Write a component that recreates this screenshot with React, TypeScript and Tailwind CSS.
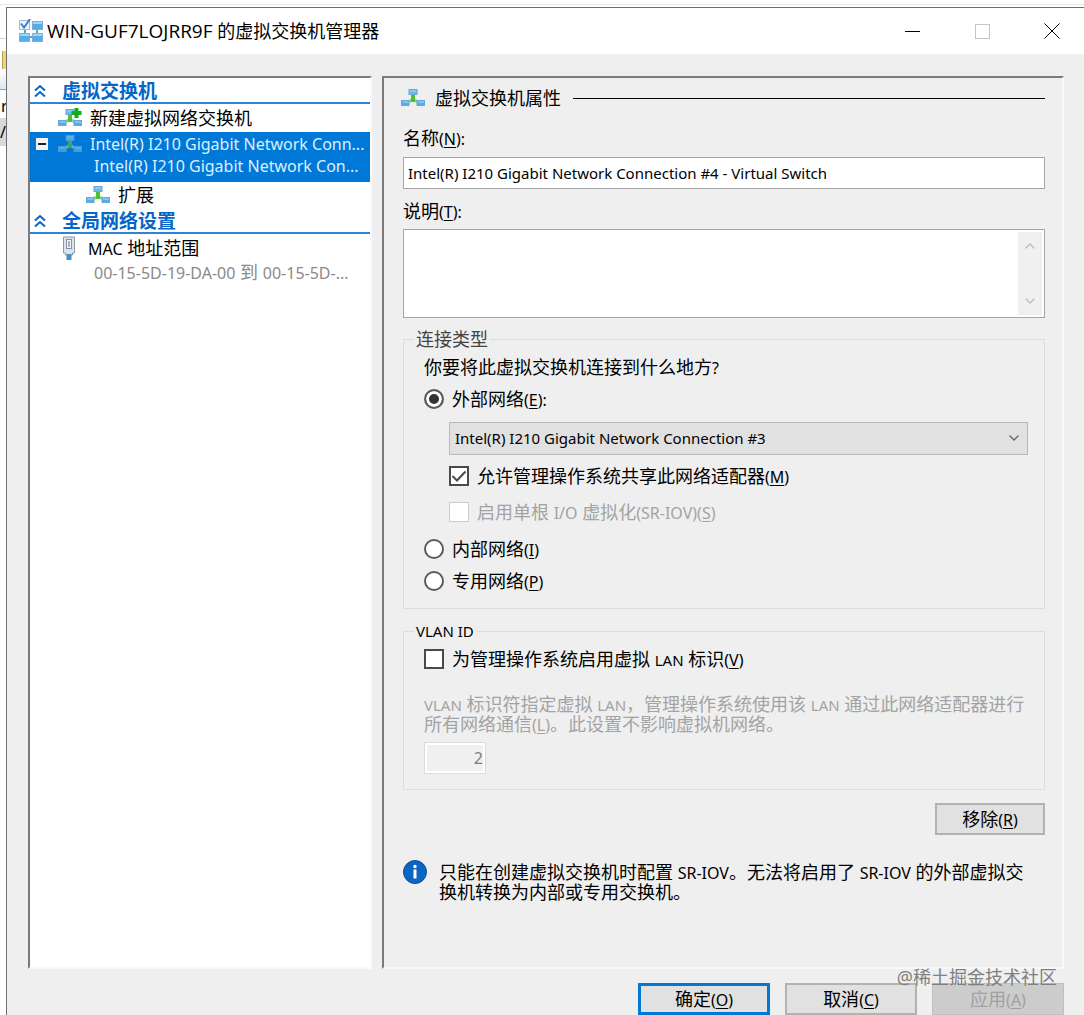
import { useState } from 'react';
import type { ReactNode } from 'react';
import { ChevronDown, ChevronUp } from 'lucide-react';
import clsx from 'clsx';

type NetworkKind = 'external' | 'internal' | 'private';

// Latin runs are set smaller than the Chinese text around them
function Latin({ children }: { children: ReactNode }) {
  return <span className="text-base leading-none">{children}</span>;
}

function Small({ children }: { children: ReactNode }) {
  return <span className="text-[15px] leading-none">{children}</span>;
}

function Key({ letter, colon = false }: { letter: string; colon?: boolean }) {
  return (
    <Latin>
      (<u className="underline-offset-2">{letter}</u>){colon && ':'}
    </Latin>
  );
}

function SwitchIcon({ plus = false, dim = false }: { plus?: boolean; dim?: boolean }) {
  return (
    <svg viewBox="0 0 24 20" className={clsx('w-6 h-5 flex-none', dim && 'opacity-70')}>
      <path d="M5 14.500l5-2h4l5 2" fill="none" stroke="#8fd67c" strokeWidth="3" />
      <path d="M12 6v8" stroke="#4fc034" strokeWidth="4" />
      <rect x="8" y="1.500" width="8" height="5" fill="#6db9ea" stroke="#66a8d8" />
      <rect x="0.500" y="12.500" width="7.500" height="5" fill="#52aee8" stroke="#66a8d8" />
      <rect x="16" y="12.500" width="7.500" height="5" fill="#52aee8" stroke="#66a8d8" />
      <path d="M9 3h6M1.500 14h6M17 14h6" stroke="#a9dbf7" />
      {plus && <path d="M18.500 0v10M13.500 5h10" stroke="#14ad1c" strokeWidth="4" />}
    </svg>
  );
}

function ManagerIcon() {
  return (
    <svg viewBox="0 0 24 24" className="w-6 h-6 flex-none">
      <path d="M6 10v6M18 9v8M9 18h8" stroke="#7a99b3" strokeWidth="2" />
      <rect x="0.500" y="1.500" width="10" height="9" fill="#eef6fc" stroke="#a3bed2" />
      <rect x="13.500" y="2.500" width="10" height="8" fill="#52aee8" stroke="#84aece" />
      <rect x="0.500" y="14.500" width="10" height="8" fill="#52aee8" stroke="#84aece" />
      <rect x="13.500" y="14.500" width="10" height="8" fill="#52aee8" stroke="#84aece" />
      <path d="M14 4h9M1 16h9M14 16h9" stroke="#9dd6f8" strokeWidth="2" />
      <path d="M2 4.500l3 4L11 0" fill="none" stroke="#3285d0" strokeWidth="2" />
    </svg>
  );
}

function PlugIcon() {
  return (
    <svg viewBox="0 0 14 24" className="w-3.5 h-6 flex-none">
      <path d="M1.500 1h11v16h-2v2h-7v-2h-2z" fill="#dde3ea" stroke="#8b98a6" />
      <rect x="4.500" y="3.500" width="5" height="9" fill="#f6f9fb" stroke="#8492a3" />
      <rect x="6" y="5" width="2" height="6" fill="#a3b0c0" />
      <rect x="4.500" y="18" width="5" height="6" fill="#3f94c4" />
    </svg>
  );
}

function SectionHeader({ title }: { title: string }) {
  return (
    <button className="flex items-center w-full h-[26px] pt-0.5 border-b-2 border-[#2e83d9] text-left text-[#0566c8]">
      <svg viewBox="0 0 12 14" className="w-3 h-3.5 ml-1 mr-4 flex-none" fill="none" stroke="currentColor" strokeWidth="2">
        <path d="M1 6.500L6 2l5 4.500M1 12.500L6 8l5 4.500" />
      </svg>
      <span className="font-bold text-[19px] leading-6">{title}</span>
    </button>
  );
}

// Strip of the window that lies behind the dialog
function BackWindow() {
  return (
    <div className="w-1.5 flex-none overflow-hidden" aria-hidden="true">
      <div className="h-8 border-b border-gray-300" />
      <div className="h-3" />
      <div className="h-[18px] ml-0.5 bg-[#f1d47c] border-l border-[#b99c4e]" />
      <div className="h-[21px] border-b border-gray-400 bg-gradient-to-b from-white to-[#dde8f0]" />
      <div className="h-7 text-base leading-8 pl-px">r</div>
      <div className="h-7 bg-[#d9d9d9] text-base leading-7 whitespace-nowrap">/l</div>
    </div>
  );
}

function TitleBar() {
  return (
    <header className="flex items-center h-[46px] bg-white pl-3">
      <ManagerIcon />
      <h1 className="flex-1 ml-1 truncate font-['Open_Sans','Noto_Sans_CJK_SC',sans-serif] leading-7">
        <span className="text-[19px]">WIN-GUF7LOJRR9F</span> 的虚拟交换机管理器
      </h1>
      <button aria-label="最小化" className="flex w-16 h-full items-center justify-center">
        <span className="w-[15px] h-px bg-black" />
      </button>
      <button aria-label="最大化" disabled className="flex w-[76px] h-full items-center justify-center">
        <span className="size-[15px] border border-[#c4c4c4]" />
      </button>
      <button aria-label="关闭" className="flex w-16 h-full items-center justify-center">
        <svg viewBox="0 0 16 16" className="size-4" stroke="black">
          <path d="M0.500 0.500l15 15M15.500 0.500l-15 15" />
        </svg>
      </button>
    </header>
  );
}

function Sidebar() {
  return (
    <nav className="w-[344px] flex-none bg-white border-2 border-t-[#7b7b7b] border-l-[#7b7b7b] border-r-[#f9f9f9] border-b-[#f9f9f9]">
      <SectionHeader title="虚拟交换机" />
      <button className="flex items-center w-full h-7 pl-7 gap-2">
        <SwitchIcon plus />
        <span>新建虚拟网络交换机</span>
      </button>
      <button className="flex flex-col w-full h-[50px] bg-[#0078d7] text-[#dcefff] text-base text-left whitespace-nowrap overflow-hidden">
        <span className="flex items-center h-6">
          <svg viewBox="0 0 12 12" className="size-3 ml-1.5 mr-2.5 flex-none">
            <rect width="12" height="12" fill="#f4f4f4" />
            <path d="M2 6h8" stroke="#222" strokeWidth="2" />
          </svg>
          <SwitchIcon dim />
          <span className="ml-2">Intel(R) I210 Gigabit Network Conn...</span>
        </span>
        <span className="pl-16 leading-5">Intel(R) I210 Gigabit Network Con...</span>
      </button>
      <button className="flex items-center w-full h-[26px] pl-14 gap-2">
        <SwitchIcon />
        <span>扩展</span>
      </button>
      <SectionHeader title="全局网络设置" />
      <button className="block w-full text-left whitespace-nowrap">
        <span className="flex items-center h-7 pl-8 gap-3">
          <PlugIcon />
          <span>
            <Latin>MAC</Latin> 地址范围
          </span>
        </span>
        <span className="block pl-16 leading-5 text-[#8a8a8a]">
          <Latin>00-15-5D-19-DA-00</Latin> 到 <Latin>00-15-5D-...</Latin>
        </span>
      </button>
    </nav>
  );
}

function Radio({ label, letter, colon, checked, onChange }: {
  label: string;
  letter: string;
  colon?: boolean;
  checked: boolean;
  onChange: () => void;
}) {
  return (
    <label className="flex items-center h-8 gap-2">
      <input
        type="radio"
        name="network"
        checked={checked}
        onChange={onChange}
        className="appearance-none size-5 flex-none rounded-full border-2 border-[#5a5a5a] bg-white checked:bg-[#333] checked:shadow-[inset_0_0_0_3px_white]"
      />
      <span>
        {label}
        <Key letter={letter} colon={colon} />
      </span>
    </label>
  );
}

function Checkbox({ children, checked, onChange, disabled = false }: {
  children: ReactNode;
  checked: boolean;
  onChange?: () => void;
  disabled?: boolean;
}) {
  return (
    <label className={clsx('flex items-center gap-2', disabled && 'text-[#a3a3a3]')}>
      <span className="relative size-5 flex-none">
        <input
          type="checkbox"
          checked={checked}
          disabled={disabled}
          onChange={onChange}
          readOnly={!onChange}
          className={clsx(
            'appearance-none block size-5 bg-white',
            disabled ? 'border border-[#cccccc]' : 'border-2 border-[#4a4a4a]'
          )}
        />
        {checked && (
          <svg viewBox="0 0 20 20" className="absolute inset-0 pointer-events-none" fill="none" stroke="#4a4a4a" strokeWidth="2">
            <path d="M3.500 10l4.500 4.500 8.500-9" />
          </svg>
        )}
      </span>
      <span>{children}</span>
    </label>
  );
}

const groupBox = 'min-w-0 border border-[#dddddd]';
const pushButton = 'h-8 border-2 border-[#b2b2b2] bg-[#e1e1e1] leading-6';

function Properties() {
  const [name, setName] = useState('Intel(R) I210 Gigabit Network Connection #4 - Virtual Switch');
  const [notes, setNotes] = useState('');
  const [network, setNetwork] = useState<NetworkKind>('external');
  const [shared, setShared] = useState(true);
  const [vlan, setVlan] = useState(false);

  return (
    <main className="flex-1 min-w-0 pl-[19px] pr-[17px] border-2 border-t-[#7b7b7b] border-l-[#7b7b7b] border-r-[#f9f9f9] border-b-[#f9f9f9]">
      <div className="flex items-center h-10">
        <span className="-ml-0.5 flex">
          <SwitchIcon />
        </span>
        <h2 className="ml-2.5 mr-3">虚拟交换机属性</h2>
        <div className="flex-1 h-px bg-black" />
      </div>

      <label htmlFor="name" className="flex items-center h-9 mt-0.5">
        <span>
          名称
          <Key letter="N" colon />
        </span>
      </label>
      <input
        id="name"
        value={name}
        onChange={(e) => setName(e.target.value)}
        className="block w-full h-8 mt-px px-1 border border-[#a6a6a6] bg-white text-[15px]"
      />

      <label htmlFor="notes" className="flex items-center h-9 mt-1">
        <span>
          说明
          <Key letter="T" colon />
        </span>
      </label>
      <div className="flex h-[89px] p-0.5 border border-[#a6a6a6] bg-white">
        <textarea
          id="notes"
          value={notes}
          onChange={(e) => setNotes(e.target.value)}
          className="flex-1 resize-none px-1 text-[15px] outline-none"
        />
        <div className="flex flex-col justify-between w-6 py-1.5 bg-[#f0f0f0] text-[#bdbdbd]">
          <button aria-label="向上滚动" className="flex justify-center">
            <ChevronUp className="size-4" />
          </button>
          <button aria-label="向下滚动" className="flex justify-center">
            <ChevronDown className="size-4" />
          </button>
        </div>
      </div>

      <fieldset className={clsx(groupBox, 'mt-[9px] pl-5 pr-4 pb-[11px]')}>
        <legend className="-ml-2.5 px-0.5 h-6 leading-6 text-[#444]">连接类型</legend>
        <p className="h-8 leading-8">
          你要将此虚拟交换机连接到什么地方<Latin>?</Latin>
        </p>
        <Radio
          label="外部网络"
          letter="E"
          colon
          checked={network === 'external'}
          onChange={() => setNetwork('external')}
        />
        <div className="ml-[25px] mt-[7px] mb-[3px]">
          <div className="relative">
            <select
              aria-label="外部网络适配器"
              className="appearance-none block w-full h-[33px] pl-[5px] pr-8 border border-[#b9b9b9] bg-[#e1e1e1] text-[15px]"
            >
              <option>Intel(R) I210 Gigabit Network Connection #3</option>
            </select>
            <ChevronDown className="absolute right-1.5 top-2 size-4 text-[#666] pointer-events-none" strokeWidth={2} />
          </div>
          <div className="mt-[3px] h-9 flex items-center">
            <Checkbox checked={shared} onChange={() => setShared(!shared)}>
              允许管理操作系统共享此网络适配器
              <Key letter="M" />
            </Checkbox>
          </div>
          <div className="h-9 flex items-center">
            <Checkbox checked={false} disabled>
              启用单根 <Latin>I/O</Latin> 虚拟化<Latin>(SR-IOV)</Latin>
              <Key letter="S" />
            </Checkbox>
          </div>
        </div>
        <Radio
          label="内部网络"
          letter="I"
          checked={network === 'internal'}
          onChange={() => setNetwork('internal')}
        />
        <Radio
          label="专用网络"
          letter="P"
          checked={network === 'private'}
          onChange={() => setNetwork('private')}
        />
      </fieldset>

      <fieldset className={clsx(groupBox, 'mt-2.5 pl-5 pr-4 pb-[15px]')}>
        <legend className="-ml-2.5 px-0.5 h-6 text-[15px] leading-6">VLAN ID</legend>
        <div className="h-8 flex items-center">
          <Checkbox checked={vlan} onChange={() => setVlan(!vlan)}>
            为管理操作系统启用虚拟 <Small>LAN</Small> 标识
            <Key letter="V" />
          </Checkbox>
        </div>
        <label htmlFor="vlan-id" className="block mt-[19px] leading-5 text-[#a3a3a3]">
          <Small>VLAN</Small> 标识符指定虚拟 <Small>LAN</Small>，管理操作系统使用该 <Small>LAN</Small>{' '}
          通过此网络适配器进行所有网络通信
          <Key letter="L" />
          。此设置不影响虚拟机网络。
        </label>
        <input
          id="vlan-id"
          value="2"
          readOnly
          disabled={!vlan}
          className="block mt-2 w-[62px] h-8 px-0.5 border border-[#dcdcdc] bg-[#f0f0f0] shadow-[inset_0_0_0_2px_white] text-right text-base text-[#7d7d7d]"
        />
      </fieldset>

      <div className="flex justify-end mt-[13px]">
        <button className={clsx(pushButton, 'w-[110px]')}>
          移除
          <Key letter="R" />
        </button>
      </div>

      <div className="flex mt-[27px] pr-2">
        <svg viewBox="0 0 24 24" className="size-6 flex-none -mt-0.5">
          <circle cx="12" cy="12" r="11.500" fill="#0a66c2" stroke="#0b4f98" />
          <circle cx="12" cy="6.500" r="1.700" fill="white" />
          <rect x="10.500" y="9.500" width="3" height="9" fill="white" />
        </svg>
        <p className="ml-3 leading-5">
          只能在创建虚拟交换机时配置 <Latin>SR-IOV</Latin>。无法将启用了 <Latin>SR-IOV</Latin>{' '}
          的外部虚拟交换机转换为内部或专用交换机。
        </p>
      </div>
    </main>
  );
}

export default function App() {
  return (
    <div className="flex flex-col min-h-screen bg-white text-black text-lg font-['Noto_Sans','Noto_Sans_CJK_SC',sans-serif]">
      <div className="h-[5px] mb-0.5 border-b border-gray-200" />
      <div className="flex flex-1">
        <BackWindow />
        <div className="flex flex-col flex-1 min-w-0 border-t border-l border-[#6e6e6e] bg-[#efefef]">
          <TitleBar />
          <div className="flex flex-1 gap-2.5 pl-[21px] pr-5 pt-[22px]">
            <Sidebar />
            <Properties />
          </div>
          <footer className="relative flex justify-end gap-[15px] pt-3.5 pr-5">
            <button className="w-[132px] h-8 border-3 border-[#0078d7] bg-[#e1e1e1] leading-6">
              确定
              <Key letter="O" />
            </button>
            <button className={clsx(pushButton, 'w-[132px]')}>
              取消
              <Key letter="C" />
            </button>
            <button disabled className="w-[132px] h-8 border border-[#bfbfbf] bg-[#cccccc] leading-6 text-[#a0a0a0]">
              应用
              <Key letter="A" />
            </button>
            <span className="absolute right-[27px] -top-1 leading-6 text-[#808080] pointer-events-none">
              @稀土掘金技术社区
            </span>
          </footer>
        </div>
      </div>
    </div>
  );
}
